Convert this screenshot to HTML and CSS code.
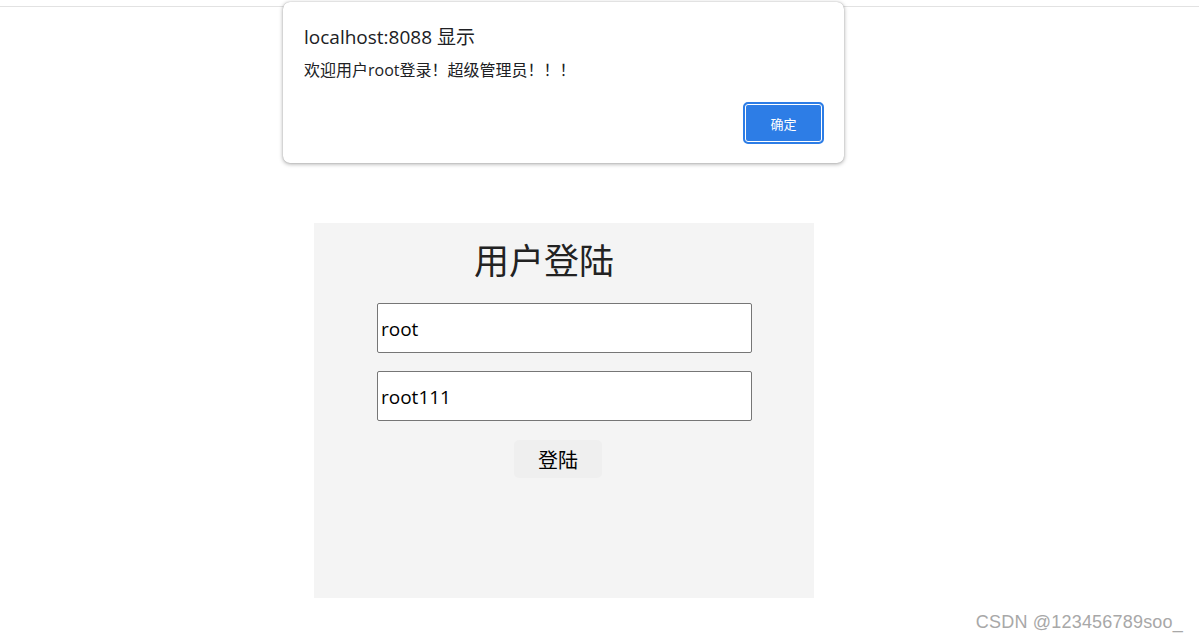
FILE: index.html
```html
<!DOCTYPE html>
<html lang="zh-CN">
<head>
    <meta charset="UTF-8">
    <meta name="viewport" content="width=device-width, initial-scale=1.0">
    <title>用户登陆</title>
    <link rel="stylesheet" href="styles.css">
</head>
<body>
    <div class="top-edge"></div>

    <div class="login-box">
        <h1 class="login-title">用户登陆</h1>
        <form class="login-form">
            <input type="text" name="username" value="root">
            <input type="text" name="password" value="root111">
            <button type="button" class="login-btn">登陆</button>
        </form>
    </div>

    <!-- alert dialog -->
    <div class="alert-box">
        <div class="alert-title">localhost:8088 显示</div>
        <div class="alert-msg">欢迎用户root登录！超级管理员！！！</div>
        <div class="alert-actions">
            <button type="button" class="alert-ok">确定</button>
        </div>
    </div>

    <div class="watermark">CSDN @123456789soo_</div>
</body>
</html>
```

FILE: styles.css
```css
body {
    margin: 0;
    padding: 0;
    background: #ffffff;
    font-family: 'Open Sans', 'Noto Sans CJK SC', sans-serif;
    color: #222;
}

.top-edge {
    height: 6px;
    border-bottom: 1px solid #e2e2e2;
}

.login-box {
    margin: 216px 0 0 314px;
    width: 500px;
    height: 375px;
    background: #f4f4f4;
    box-sizing: border-box;
    padding-top: 16px;
}

.login-title {
    margin: 0;
    padding-right: 40px;
    text-align: center;
    font-family: 'Noto Sans CJK SC', sans-serif;
    font-size: 35px;
    font-weight: normal;
    line-height: 40px;
    color: #222;
}

.login-form {
    display: flex;
    flex-direction: column;
    align-items: flex-start;
    margin-top: 24px;
    padding-left: 63px;
}

.login-form input {
    width: 375px;
    height: 50px;
    box-sizing: border-box;
    border: 1px solid #767676;
    border-radius: 2px;
    padding: 2px 3px 0;
    margin-bottom: 18px;
    font-family: 'Open Sans', 'Noto Sans CJK SC', sans-serif;
    font-size: 19px;
    color: #000;
    background: #fff;
}

.login-btn {
    margin: 1px 0 0 137px;
    width: 88px;
    height: 38px;
    border: none;
    border-radius: 5px;
    background: #efefef;
    font-family: 'Noto Sans CJK SC', sans-serif;
    font-size: 20px;
    color: #000;
    padding: 0;
    cursor: pointer;
}

.alert-box {
    position: absolute;
    top: 2px;
    left: 283px;
    width: 561px;
    height: 161px;
    box-sizing: border-box;
    background: #fff;
    border-radius: 7px;
    box-shadow: 0 1px 4px rgba(0,0,0,.35), 0 0 1px rgba(0,0,0,.3);
    padding: 22px 20px 0 21px;
}

.alert-title {
    font-size: 19px;
    line-height: 26px;
    color: #202124;
}

.alert-msg {
    margin-top: 9px;
    font-size: 16px;
    line-height: 22px;
    color: #202124;
}

.alert-actions {
    display: flex;
    justify-content: flex-end;
    margin-top: 21px;
}

.alert-ok {
    width: 81px;
    height: 42px;
    box-sizing: border-box;
    border: 2px solid #2d7de6;
    border-radius: 5px;
    box-shadow: inset 0 0 0 1px #ffffff;
    background: #2d7de6;
    color: #fff;
    font-family: 'Noto Sans CJK SC', sans-serif;
    font-size: 13px;
    padding: 0;
}

.watermark {
    position: absolute;
    right: 16px;
    bottom: 8px;
    font-family: 'Liberation Sans', sans-serif;
    font-size: 18px;
    color: #a8a8a8;
    letter-spacing: 0.2px;
}
```
